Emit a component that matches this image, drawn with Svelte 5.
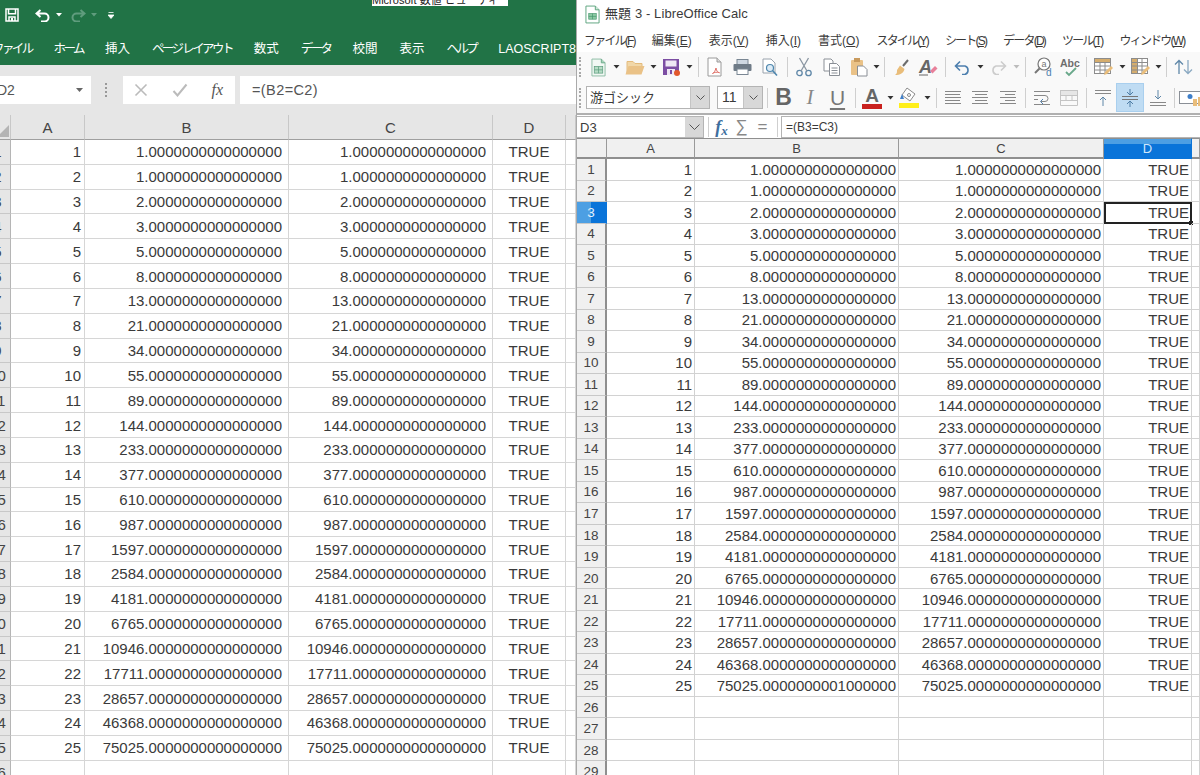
<script>
  const fib = [1, 1];
  while (fib.length < 25) fib.push(fib[fib.length - 1] + fib[fib.length - 2]);
  const decimals = ".0000000000000000";

  const tabs = ["ファイル", "ホーム", "挿入", "ページ レイアウト", "数式", "データ", "校閲", "表示", "ヘルプ", "LAOSCRIPT8"];
  const menus = [
    ["ファイル(", "F", ")"], ["編集(", "E", ")"], ["表示(", "V", ")"], ["挿入(", "I", ")"], ["書式(", "O", ")"],
    ["スタイル(", "Y", ")"], ["シート(", "S", ")"], ["データ(", "D", ")"], ["ツール(", "T", ")"], ["ウィンドウ(", "W", ")"],
  ];

  const emptyExcel = [26];
  const emptyCalc = [26, 27, 28, 29];

  // the reference's gothic has much narrower katakana than Noto
  const isKana = (s) => /[ァ-ヶー]/.test(s);

  function calcB(i) {
    return i === 24 ? "75025.0000000001000000" : fib[i] + decimals;
  }
</script>

{#snippet arrow()}<svg width="7" height="4" viewBox="0 0 7 4"><path d="M0.5 0h6L3.5 3.5z" fill="#333" /></svg>{/snippet}
{#snippet sep()}<i class="sep"></i>{/snippet}
{#snippet grip()}<i class="grip"></i>{/snippet}
{#snippet lines(a, b, c)}
  <svg width="18" height="18" viewBox="0 0 18 18" stroke="#888" stroke-width="1">
    <path d="M{a} 2.5h{17 - a}M{b} 5.5h{16 - b}M{c} 8.5h{17 - c}M{b} 11.5h{16 - b}M{a} 14.5h{17 - a}" />
  </svg>
{/snippet}

<div class="screen">
  <section class="excel">
    <div class="tip"><span>Microsoft 数値 ビューティー</span></div>
    <header class="green">
      <div class="qat">
        <svg class="q-save" width="14" height="14" viewBox="0 0 14 14"><path d="M1 1h12v12H1zM3.5 1.8v4h7v-4M4 13V9h6v4" fill="none" stroke="#fff" stroke-width="1.5" /><rect x="6" y="10" width="2" height="3" fill="#fff" /></svg>
        <svg class="q-undo" width="16" height="13" viewBox="0 0 16 13"><path d="M5.5 1 1.5 4.5l4 3.5M2 4.5h7.5a4 4 0 0 1 0 8H6" fill="none" stroke="#fff" stroke-width="2" /></svg>
        <svg class="q-a" width="6" height="4" viewBox="0 0 6 4"><path d="M0 0h6L3 3.5z" fill="#fff" /></svg>
        <svg class="q-redo" width="16" height="13" viewBox="0 0 16 13"><path d="M10.5 1l4 3.5-4 3.5M14 4.5H6.5a4 4 0 0 0 0 8H10" fill="none" stroke="#5f9c7d" stroke-width="2" /></svg>
        <svg class="q-b" width="6" height="4" viewBox="0 0 6 4"><path d="M0 0h6L3 3.5z" fill="#5f9c7d" /></svg>
        <svg class="q-c" width="6" height="7" viewBox="0 0 6 7"><path d="M0.5 0.5h5M0 3h6L3 6.5z" stroke="#fff" stroke-width="0.8" fill="#fff" /></svg>
      </div>
      <nav class="tabs">
        {#each tabs as tab}<span class:kana={isKana(tab)}>{tab}</span>{/each}
      </nav>
    </header>

    <div class="xl-formula">
      <div class="xl-name"><span>D2</span><svg width="7" height="4" viewBox="0 0 7 4"><path d="M0 0h7L3.5 4z" fill="#666" /></svg></div>
      <i class="xl-grip"></i>
      <div class="xl-btns">
        <svg width="14" height="14" viewBox="0 0 14 14"><path d="M1.5 1.5l11 11M12.5 1.5l-11 11" stroke="#bbb" stroke-width="1.6" /></svg>
        <svg width="16" height="14" viewBox="0 0 16 14"><path d="M1.5 8l4 4.5L14.5 1.5" fill="none" stroke="#bbb" stroke-width="2" /></svg>
        <em>fx</em>
      </div>
      <div class="xl-input">=(B2=C2)</div>
    </div>

    <div class="xl-grid">
      <div class="xl-h corner"><i></i></div>
      <div class="xl-h">A</div>
      <div class="xl-h">B</div>
      <div class="xl-h">C</div>
      <div class="xl-h">D</div>
      <div class="xl-h"></div>
      {#each fib as value, i}
        <div class="xl-h num">{i + 1}</div>
        <div class="xl-c">{i + 1}</div>
        <div class="xl-c wide">{value}{decimals}</div>
        <div class="xl-c wide">{value}{decimals}</div>
        <div class="xl-c mid">TRUE</div>
        <div class="xl-c"></div>
      {/each}
      {#each emptyExcel as n}
        <div class="xl-h num">{n}</div>
        <div class="xl-c"></div>
        <div class="xl-c"></div>
        <div class="xl-c"></div>
        <div class="xl-c"></div>
        <div class="xl-c"></div>
      {/each}
    </div>
  </section>

  <section class="calc">
    <div class="title">
      <svg width="15" height="19" viewBox="0 0 16 20"><path d="M1 1h10l4 4v14H1z" fill="#fff" stroke="#5aa27c" /><path d="M11 1v4h4" fill="#cfe8d8" stroke="#5aa27c" /><rect x="4" y="9" width="8" height="6" fill="#8cc9a4" stroke="#43946a" stroke-width="0.7" /><path d="M8 9v6M4 12h8" stroke="#43946a" stroke-width="0.7" /></svg>
      <span>無題 3 - LibreOffice Calc</span>
    </div>
    <nav class="menu">
      {#each menus as [before, key, after]}<span class:kana={isKana(before)}>{before}<u>{key}</u>{after}</span>{/each}
    </nav>

    <div class="tools one">
      <span class="slot" style="width:9px">{@render grip()}</span>
      <span class="slot" style="width:26px"><svg width="15" height="19" viewBox="0 0 16 20"><path d="M1 1h10l4 4v14H1z" fill="#f2f8f4" stroke="#8bbba3" /><path d="M11 1v4h4" fill="#a7d4ba" stroke="#6aa98a" /><rect x="3.5" y="9" width="9" height="7" fill="#b6dcc5" stroke="#5f9f80" stroke-width="0.8" /><path d="M8 9v7M3.5 12.5h9" stroke="#5f9f80" stroke-width="0.8" /></svg></span>
      <span class="slot" style="width:11px">{@render arrow()}</span>
      <span class="slot" style="width:26px"><svg width="20" height="15" viewBox="0 0 20 15"><path d="M2 14V1.5h6l2 2h7V6" fill="#f1d7a8" stroke="#e4bb7c" /><path d="M0.5 14.5 3.5 6h16l-3 8.500z" fill="#eac287" /></svg></span>
      <span class="slot" style="width:10px">{@render arrow()}</span>
      <span class="slot" style="width:26px"><svg width="18" height="18" viewBox="0 0 18 18"><path d="M1 1h16v16H1z" fill="#7c4ea3" /><rect x="3.500" y="2.500" width="11" height="6" fill="#efe8f4" /><rect x="5" y="11" width="8" height="6" fill="#efe8f4" /><rect x="8" y="12" width="2" height="4" fill="#7c4ea3" /><circle cx="15" cy="15" r="3" fill="#e2582c" /></svg></span>
      <span class="slot" style="width:10px">{@render arrow()}</span>
      <span class="slot" style="width:8px">{@render sep()}</span>
      <span class="slot" style="width:26px"><svg width="16" height="20" viewBox="0 0 16 20"><path d="M1 1h9l4 4v14H1z" fill="#fff" stroke="#9a9a9a" /><path d="M10 1v4h4" fill="#ddd" stroke="#9a9a9a" /><path d="M9 11c-.8 3-2 5-3.500 5.500 2-1.500 4.500-1.500 7-.8-1.500-.2-3.200-1.700-3.500-4.700z" fill="none" stroke="#e0726a" stroke-width="1" /></svg></span>
      <span class="slot" style="width:28px"><svg width="19" height="16" viewBox="0 0 19 16"><rect x="4" y="0.500" width="11" height="5" fill="#cfd8e2" stroke="#7a8794" /><rect x="0.500" y="5" width="18" height="7" rx="1" fill="#6f7b87" /><rect x="4" y="10" width="11" height="5.500" fill="#fff" stroke="#7a8794" /></svg></span>
      <span class="slot" style="width:28px"><svg width="16" height="19" viewBox="0 0 16 19"><path d="M1 1h8l4 4v10H1z" fill="#fff" stroke="#9aa3ad" /><circle cx="8" cy="10" r="3.500" fill="#dcebf6" stroke="#4e86ad" stroke-width="1.200" /><path d="M10.500 12.500 15 17.500" stroke="#4e86ad" stroke-width="1.600" /></svg></span>
      <span class="slot" style="width:6px">{@render sep()}</span>
      <span class="slot" style="width:28px"><svg width="16" height="20" viewBox="0 0 16 20" fill="none" stroke="#5f87a8" stroke-width="1.300"><circle cx="3.500" cy="16" r="2.700" /><circle cx="12.500" cy="16" r="2.700" /><path d="M5 14 12.500 1M11 14 3.500 1" stroke="#8a96a2" /></svg></span>
      <span class="slot" style="width:27px"><svg width="17" height="18" viewBox="0 0 17 18"><path d="M1 1h7l2 2v10H1z" fill="#fff" stroke="#8a8f96" /><path d="M6.500 5.500h7l3 3v9h-10z" fill="#fff" stroke="#8a8f96" /><path d="M8.500 10h6M8.500 12.500h6M8.500 15h6" stroke="#8a8f96" /></svg></span>
      <span class="slot" style="width:27px"><svg width="18" height="20" viewBox="0 0 18 20"><rect x="1" y="3" width="12" height="15" rx="1" fill="#eac287" /><rect x="4" y="1" width="6" height="4" fill="#c99b5e" /><path d="M7.500 9h6l3.500 3.500V19H7.500z" fill="#fff" stroke="#8a8f96" /></svg></span>
      <span class="slot" style="width:8px">{@render arrow()}</span>
      <span class="slot" style="width:8px">{@render sep()}</span>
      <span class="slot" style="width:26px"><svg width="15" height="17" viewBox="0 0 15 17"><path d="M14 1 9 7" stroke="#6c6c6c" stroke-width="2" /><path d="M6 6.500 10.500 10c-1 4-4 6-9.500 6 2-1 2-3 2-5z" fill="#e9bd7a" /></svg></span>
      <span class="slot" style="width:28px"><svg width="20" height="18" viewBox="0 0 20 18"><text x="1" y="15" font-family="Liberation Sans" font-size="18" font-weight="700" font-style="italic" fill="#666">A</text><path d="M1 17h9" stroke="#666" /><path d="M12 13l5-5 2.500 2.500-5 5z" fill="#e8809a" /></svg></span>
      <span class="slot" style="width:6px">{@render sep()}</span>
      <span class="slot" style="width:28px"><svg width="17" height="15" viewBox="0 0 17 15"><path d="M6 1.500 1.500 6 6 10.500M2 6h9a4.500 4.500 0 0 1 0 8.500H8" fill="none" stroke="#4d7fae" stroke-width="1.600" /></svg></span>
      <span class="slot" style="width:8px">{@render arrow()}</span>
      <span class="slot" style="width:28px"><svg width="17" height="15" viewBox="0 0 17 15"><path d="M11 1.500 15.500 6 11 10.500M15 6H6a4.500 4.500 0 0 0 0 8.500h3" fill="none" stroke="#ccc" stroke-width="1.600" /></svg></span>
      <span class="slot dim" style="width:8px">{@render arrow()}</span>
      <span class="slot" style="width:10px">{@render sep()}</span>
      <span class="slot" style="width:26px"><svg width="19" height="20" viewBox="0 0 19 20" fill="none"><circle cx="10" cy="7" r="6" fill="#fff" stroke="#777" stroke-width="1.200" /><text x="10" y="10" text-anchor="middle" font-family="Liberation Sans" font-size="9" fill="#777">a</text><path d="M5.500 11.500 1 16" stroke="#777" stroke-width="2" /><text x="12" y="19" font-family="Liberation Sans" font-size="10" fill="#4d7fae">d</text></svg></span>
      <span class="slot" style="width:27px"><svg width="20" height="20" viewBox="0 0 20 20"><text x="0" y="10" font-family="Liberation Sans" font-size="10.500" font-weight="700" fill="#6d6d6d">Abc</text><path d="M6 15l3 3 7-7" fill="none" stroke="#69a88a" stroke-width="1.800" /></svg></span>
      <span class="slot" style="width:6px">{@render sep()}</span>
      <span class="slot" style="width:28px"><svg width="19" height="18" viewBox="0 0 19 18"><rect x="0.500" y="0.500" width="16" height="15" fill="#fff" stroke="#8c8c8c" /><rect x="0.500" y="0.500" width="16" height="4" fill="#d5ad6e" stroke="#8c8c8c" /><path d="M0.500 8h16M0.500 12h16M6 4.500v11M11 4.500v11" stroke="#8c8c8c" /><path d="M10 17l1-3 6-6 2 2-6 6z" fill="#e9bd7a" /></svg></span>
      <span class="slot" style="width:10px">{@render arrow()}</span>
      <span class="slot" style="width:27px"><svg width="19" height="18" viewBox="0 0 19 18"><rect x="0.500" y="0.500" width="16" height="15" fill="#fff" stroke="#8c8c8c" /><rect x="0.500" y="0.500" width="6" height="15" fill="#d5ad6e" stroke="#8c8c8c" /><path d="M0.500 4.500h16M0.500 8h16M0.500 12h16M11 0.500v15" stroke="#8c8c8c" /><path d="M10 17l1-3 6-6 2 2-6 6z" fill="#e9bd7a" /></svg></span>
      <span class="slot" style="width:8px">{@render arrow()}</span>
      <span class="slot" style="width:8px">{@render sep()}</span>
      <span class="slot" style="width:27px"><svg width="19" height="16" viewBox="0 0 19 16" fill="none" stroke-width="1.300"><path d="M5 15V1.500M1 5.500l4-4 4 4" stroke="#5f87a8" /><path d="M14 1v13.500M10 10.500l4 4 4-4" stroke="#8aa9c2" /></svg></span>
    </div>

    <div class="tools two">
      <span class="slot" style="width:9px">{@render grip()}</span>
      <div class="combo font"><span>游ゴシック</span><b><svg width="9" height="5" viewBox="0 0 9 5"><path d="M0.500 0.500l4 4 4-4" fill="none" stroke="#555" /></svg></b></div>
      <div class="combo size"><span>11</span><b><svg width="9" height="5" viewBox="0 0 9 5"><path d="M0.500 0.500l4 4 4-4" fill="none" stroke="#555" /></svg></b></div>
      <span class="slot" style="width:8px">{@render sep()}</span>
      <span class="slot glyph bold" style="width:25px">B</span>
      <span class="slot glyph ital" style="width:28px">I</span>
      <span class="slot glyph under" style="width:27px">U</span>
      <span class="slot" style="width:9px">{@render sep()}</span>
      <span class="slot letter" style="width:24px"><span>A</span><i class="bar red"></i></span>
      <span class="slot" style="width:12px">{@render arrow()}</span>
      <span class="slot" style="width:26px"><span class="bucket"><svg width="20" height="16" viewBox="0 0 20 16"><path d="M8 1l8 6-5 7-8-6z" fill="#fff" stroke="#8a8a8a" /><path d="M3 7l-2 5h4z" fill="#3f7fc9" /><circle cx="10" cy="8" r="1.500" fill="none" stroke="#8a8a8a" /></svg><i class="bar yellow"></i></span></span>
      <span class="slot" style="width:10px">{@render arrow()}</span>
      <span class="slot" style="width:8px">{@render sep()}</span>
      <span class="slot" style="width:26px">{@render lines(1, 1, 1)}</span>
      <span class="slot" style="width:28px">{@render lines(1, 4, 1)}</span>
      <span class="slot" style="width:27px">{@render lines(1, 6, 1)}</span>
      <span class="slot" style="width:8px">{@render sep()}</span>
      <span class="slot" style="width:26px"><svg width="18" height="18" viewBox="0 0 18 18" fill="none" stroke="#888"><path d="M1 2.500h16M1 6.500h11a2.500 2.500 0 0 1 0 6H8M1 10.500h4M1 15.500h16" /><path d="M10 10l-2.500 2.500L10 15" stroke="#4d7fae" /></svg></span>
      <span class="slot" style="width:27px"><svg width="18" height="16" viewBox="0 0 18 16" fill="none" stroke="#c4c4c4"><path d="M0.500 0.500h17v15h-17zM0.500 5.500h17M0.500 10.500h17M6 5.500v5M12 5.500v5" /><rect x="0.500" y="0.500" width="17" height="5" fill="#e6e6e6" /></svg></span>
      <span class="slot" style="width:8px">{@render sep()}</span>
      <span class="slot" style="width:26px"><svg width="18" height="18" viewBox="0 0 18 18" fill="none"><path d="M1 1.500h16M1 4.500h16" stroke="#888" /><path d="M9 17V8M6 11l3-3 3 3" stroke="#5f87a8" /></svg></span>
      <span class="slot on" style="width:28px"><svg width="18" height="20" viewBox="0 0 18 20" fill="none"><path d="M1 8.500h16M1 11.500h16" stroke="#777" /><path d="M9 1v6M6 4l3 3 3-3M9 19v-6M6 16l3-3 3 3" stroke="#4f7ea6" /></svg></span>
      <span class="slot" style="width:27px"><svg width="18" height="18" viewBox="0 0 18 18" fill="none"><path d="M1 13.500h16M1 16.500h16" stroke="#888" /><path d="M9 1v9M6 7l3 3 3-3" stroke="#5f87a8" /></svg></span>
      <span class="slot" style="width:7px">{@render sep()}</span>
      <span class="slot" style="width:27px"><svg width="25" height="18" viewBox="0 0 25 18"><rect x="0.500" y="2.500" width="21" height="12" fill="#fff" stroke="#8a8f96" /><circle cx="11" cy="7.500" r="2.500" fill="#3f7fc9" /><rect x="14" y="10" width="4" height="7" fill="#e9bd7a" /><rect x="19" y="8" width="5" height="9" fill="#e9bd7a" /></svg></span>
    </div>

    <div class="c-formula">
      <div class="c-name"><span>D3</span><b><svg width="11" height="6" viewBox="0 0 11 6"><path d="M0.500 0.500l5 5 5-5" fill="none" stroke="#555" /></svg></b></div>
      <span class="slot" style="width:8px">{@render sep()}</span>
      <span class="fx">f<sub>x</sub></span>
      <span class="sum">∑</span>
      <span class="eq">=</span>
      <span class="slot" style="width:8px">{@render sep()}</span>
      <div class="c-input">=(B3=C3)</div>
    </div>

    <div class="c-grid">
      <div class="c-h"></div>
      <div class="c-h">A</div>
      <div class="c-h">B</div>
      <div class="c-h">C</div>
      <div class="c-h active">D</div>
      <div class="c-h"></div>
      {#each fib as value, i}
        <div class="c-n" class:active={i === 2}>{i + 1}</div>
        <div class="c-c">{i + 1}</div>
        <div class="c-c">{calcB(i)}</div>
        <div class="c-c">{value}{decimals}</div>
        <div class="c-c" class:cursor={i === 2}>TRUE</div>
        <div class="c-c"></div>
      {/each}
      {#each emptyCalc as n}
        <div class="c-n">{n}</div>
        <div class="c-c"></div>
        <div class="c-c"></div>
        <div class="c-c"></div>
        <div class="c-c"></div>
        <div class="c-c"></div>
      {/each}
    </div>
  </section>
</div>

<style>
  :global(body) {
    background: #fff;
  }

  .screen {
    display: flex;
    width: 1200px;
    height: 775px;
    overflow: hidden;
    font-family: "Liberation Sans", "Noto Sans CJK JP", sans-serif;
    color: #3a3a3a;
  }

  /* excel window */
  .excel {
    position: relative;
    width: 576px;
    flex: none;
    overflow: hidden;
    background: #fff;
  }

  .tip {
    position: absolute;
    left: 372px;
    top: 0;
    width: 136px;
    height: 6px;
    background: #fff;
    overflow: hidden;
    font-size: 11px;
    color: #222;
    text-align: center;
  }

  .tip span {
    display: block;
    margin-top: -9px;
    white-space: nowrap;
  }

  .green {
    height: 65px;
    background: #217346;
    color: #fff;
  }

  .qat {
    display: flex;
    align-items: center;
    height: 30px;
  }

  .q-save {
    margin-left: 5px;
  }

  .q-undo {
    margin-left: 16px;
  }

  .q-a {
    margin-left: 5px;
  }

  .q-redo {
    margin-left: 8px;
  }

  .q-b {
    margin-left: 5px;
  }

  .q-c {
    margin-left: 11px;
  }

  .tabs {
    display: flex;
    gap: 22px;
    margin-left: -8px;
    height: 35px;
    padding-top: 10px;
    box-sizing: border-box;
    font-size: 12.5px;
    line-height: 18px;
    white-space: nowrap;
  }

  .tabs .kana {
    letter-spacing: -2.6px;
  }

  .xl-formula {
    display: flex;
    align-items: center;
    height: 50px;
    background: #e6e6e6;
    box-sizing: border-box;
    padding-bottom: 1px;
  }

  .xl-name {
    display: flex;
    flex: none;
    align-items: center;
    justify-content: space-between;
    width: 105px;
    height: 28px;
    margin-left: -14px;
    padding: 0 8px 0 11px;
    box-sizing: border-box;
    background: #fff;
    font-size: 14px;
    color: #555;
  }

  .xl-grip {
    flex: none;
    width: 2px;
    height: 14px;
    margin: 0 16px 0 14px;
    border-left: 2px dotted #999;
    box-sizing: border-box;
  }

  .xl-btns {
    display: flex;
    flex: none;
    align-items: center;
    justify-content: space-between;
    width: 112px;
    height: 28px;
    padding: 0 12px 0 11px;
    box-sizing: border-box;
    background: #fff;
  }

  .xl-btns em {
    font-family: "Liberation Serif", serif;
    font-size: 16px;
    color: #555;
  }

  .xl-input {
    flex: 1;
    height: 28px;
    line-height: 28px;
    margin-left: 5px;
    padding-left: 12px;
    background: #fff;
    font-size: 14.5px;
    letter-spacing: 0.4px;
    color: #555;
    white-space: nowrap;
  }

  .xl-grid {
    display: grid;
    grid-template-columns: 26px 74px 204px 204px 73px 1fr;
    grid-template-rows: 25px;
    grid-auto-rows: 24.84px;
    margin-left: -15px;
    font-size: 15px;
  }

  .xl-h {
    display: flex;
    align-items: center;
    justify-content: center;
    background: #e6e6e6;
    border-right: 1px solid #c8c8c8;
    border-bottom: 1px solid #9f9f9f;
    box-sizing: border-box;
    color: #444;
  }

  .xl-h.num {
    border-right: 1px solid #b5b5b5;
    border-bottom: 1px solid #c8c8c8;
  }

  .corner {
    position: relative;
  }

  .corner i {
    position: absolute;
    right: 1px;
    bottom: 2px;
    border-style: solid;
    border-width: 0 0 12px 12px;
    border-color: transparent transparent #b4b4b4 transparent;
  }

  .xl-c {
    display: flex;
    align-items: center;
    justify-content: flex-end;
    padding-right: 3px;
    border-right: 1px solid #d6d6d6;
    border-bottom: 1px solid #d6d6d6;
    box-sizing: border-box;
    white-space: nowrap;
    overflow: hidden;
  }

  .xl-c.wide {
    padding-right: 6px;
  }

  .xl-c.mid {
    justify-content: center;
    padding-right: 0;
  }

  /* calc window */
  .calc {
    flex: 1;
    min-width: 0;
    overflow: hidden;
    border-left: 1px solid #aaa;
  }

  .title {
    display: flex;
    align-items: center;
    gap: 5px;
    height: 28px;
    padding-left: 8px;
    background: #fff;
    font-size: 13px;
    line-height: 16px;
    letter-spacing: 0.1px;
  }

  .menu {
    display: flex;
    gap: 17px;
    height: 24px;
    padding: 5px 0 0 7px;
    box-sizing: border-box;
    background: #fff;
    font-size: 12px;
    line-height: 16px;
    white-space: nowrap;
  }

  .menu .kana {
    letter-spacing: -1.8px;
  }

  .tools {
    display: flex;
    align-items: center;
    margin-left: -1px;
    background: #f9f9f9;
  }

  .tools.one {
    height: 30px;
  }

  .tools.two {
    height: 33px;
    border-bottom: 2px solid #b0b0b0;
    box-sizing: border-box;
  }

  .slot {
    display: flex;
    flex: none;
    align-items: center;
    justify-content: center;
    height: 100%;
  }

  .slot.dim {
    opacity: 0.3;
  }

  .slot.on {
    height: 29px;
    background: #bfdcf3;
    box-shadow: inset 0 0 0 1px #a9cfee;
  }

  .sep {
    display: block;
    width: 1px;
    height: 20px;
    background: #cfcfcf;
  }

  .grip {
    display: block;
    width: 2px;
    height: 20px;
    border-left: 2px dotted #a8a8a8;
  }

  .combo {
    display: flex;
    flex: none;
    align-items: stretch;
    height: 23px;
    border: 1px solid #b4b4b4;
    box-sizing: border-box;
    background: #fff;
    font-size: 13px;
  }

  .combo.font {
    width: 124px;
    margin-left: 1px;
  }

  .combo.size {
    width: 46px;
    margin-left: 7px;
  }

  .combo span {
    flex: 1;
    padding-left: 3px;
    line-height: 21px;
  }

  .combo.size span {
    padding-left: 4px;
    font-size: 14px;
  }

  .combo b {
    display: flex;
    align-items: center;
    justify-content: center;
    width: 18px;
    background: #d8d8d8;
    border-left: 1px solid #c4c4c4;
  }

  .glyph {
    color: #666;
    font-size: 21px;
    line-height: 1;
  }

  .glyph.bold {
    font-weight: 700;
    font-size: 23px;
  }

  .glyph.ital {
    font-family: "Liberation Serif", serif;
    font-style: italic;
    color: #888;
  }

  .glyph.under {
    text-decoration: underline;
    text-underline-offset: 3px;
    font-weight: 400;
    color: #777;
  }

  .letter,
  .bucket {
    display: flex;
    flex-direction: column;
    align-items: center;
    justify-content: center;
    font-size: 19px;
    font-weight: 700;
    line-height: 17px;
    color: #666;
  }

  .bar {
    display: block;
    width: 20px;
    height: 5px;
  }

  .bar.red {
    background: #c9211e;
  }

  .bar.yellow {
    background: #ffef1a;
  }

  .c-formula {
    display: flex;
    align-items: center;
    height: 23px;
    margin-left: -1px;
    background: #fff;
  }

  .c-name {
    display: flex;
    flex: none;
    align-items: stretch;
    width: 128px;
    height: 22px;
    border: 1px solid #b4b4b4;
    box-sizing: border-box;
    font-size: 13px;
  }

  .c-name span {
    flex: 1;
    padding-left: 3px;
    line-height: 21px;
  }

  .c-name b {
    display: flex;
    align-items: center;
    justify-content: center;
    width: 18px;
    background: #d8d8d8;
  }

  .fx {
    flex: none;
    width: 19px;
    text-align: center;
    font-family: "Liberation Serif", serif;
    font-size: 18px;
    font-style: italic;
    font-weight: 700;
    line-height: 18px;
    color: #3f6f9e;
  }

  .fx sub {
    font-size: 13px;
    vertical-align: -2px;
    line-height: 0;
  }

  .sum,
  .eq {
    flex: none;
    width: 21px;
    text-align: center;
    font-size: 17px;
    color: #888;
  }

  .c-input {
    flex: 1;
    height: 22px;
    line-height: 21px;
    padding-left: 4px;
    border: 1px solid #b4b4b4;
    border-right: 0;
    box-sizing: border-box;
    font-size: 12px;
  }

  .c-grid {
    display: grid;
    grid-template-columns: 30px 88px 204px 205px 88px 1fr;
    grid-template-rows: 21px;
    grid-auto-rows: 21.52px;
    font-size: 15px;
  }

  .c-h {
    display: flex;
    align-items: center;
    justify-content: center;
    background: #f0f0f0;
    border-top: 1px solid #8f8f8f;
    border-right: 1px solid #9a9a9a;
    border-bottom: 2px solid #8f8f8f;
    box-sizing: border-box;
    font-size: 13px;
    color: #444;
  }

  .c-h.active {
    background: linear-gradient(#4d9fe3 0 30%, #0a74d9 30%);
    color: #cfe6fb;
    border-bottom-color: #0a74d9;
    border-right-color: #0a74d9;
  }

  .c-n {
    display: flex;
    align-items: center;
    justify-content: center;
    background: #f0f0f0;
    border-right: 2px solid #8f8f8f;
    border-bottom: 1px solid #c8c8c8;
    box-sizing: border-box;
    font-size: 13.5px;
    color: #444;
  }

  .c-n.active {
    background: linear-gradient(90deg, #4d9fe3 0 50%, #0a74d9 50%);
    color: #e3f0fc;
    border-right-color: #0a74d9;
  }

  .c-c {
    position: relative;
    display: flex;
    align-items: center;
    justify-content: flex-end;
    padding-right: 2px;
    border-right: 1px solid #d2d2d2;
    border-bottom: 1px solid #d2d2d2;
    box-sizing: border-box;
    white-space: nowrap;
  }

  .c-c.cursor {
    outline: 2px solid #222;
    outline-offset: -2px;
  }

  .c-c.cursor::after {
    content: "";
    position: absolute;
    right: -2px;
    bottom: -2px;
    width: 4px;
    height: 4px;
    background: #222;
  }
</style>
